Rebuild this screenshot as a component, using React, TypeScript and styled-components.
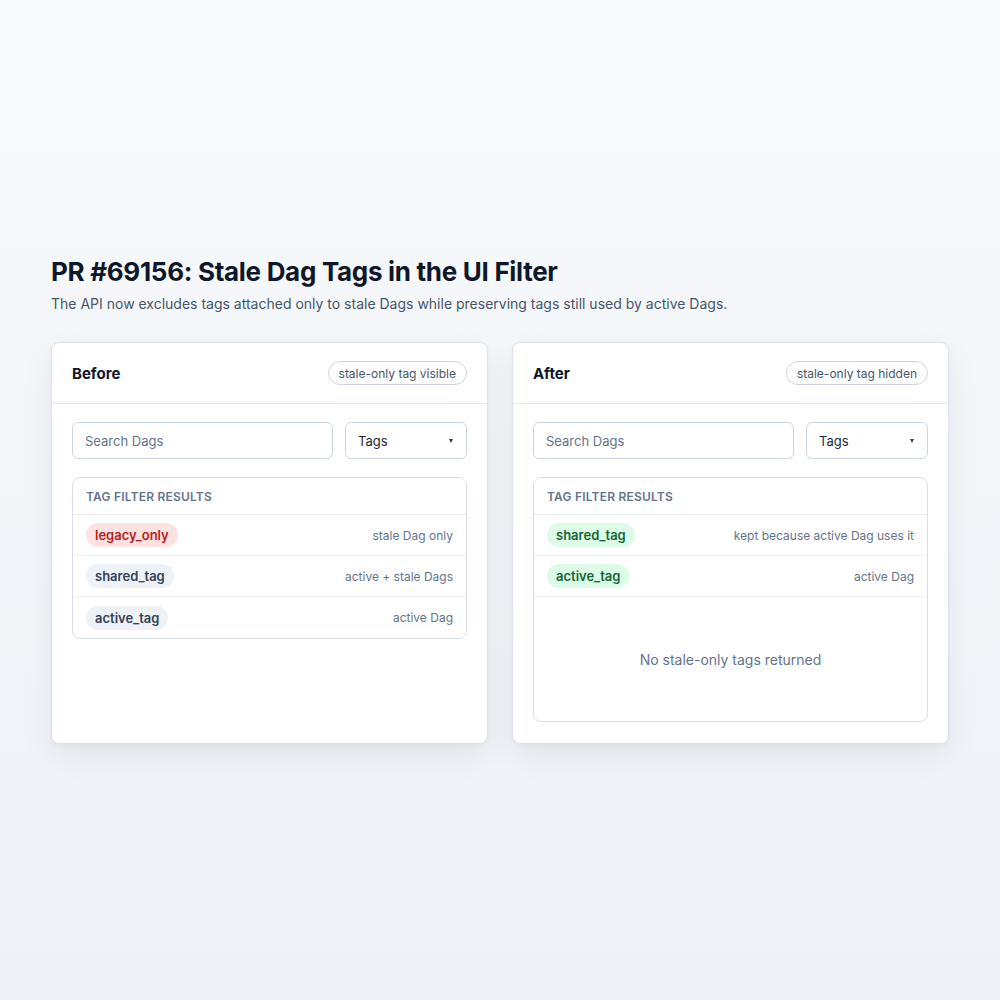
import React from "react";
import styled, { createGlobalStyle } from "styled-components";

const Global = createGlobalStyle`
  html, body { margin: 0; padding: 0; }
  body {
    font-family: Inter, "Noto Sans", "Liberation Sans", sans-serif;
    background: linear-gradient(180deg, #f8fafc 0%, #eef2f7 100%);
    color: #0f172a;
    -webkit-font-smoothing: antialiased;
  }
  * { box-sizing: border-box; }
`;

const Page = styled.main`
  min-height: 1000px;
  display: flex;
  align-items: center;
  justify-content: center;
  padding: 0 51px;
`;

const Wrap = styled.div`
  width: 898px;
`;

const Title = styled.h1`
  margin: 0 0 6px;
  font-size: 26px;
  line-height: 32px;
  font-weight: 700;
  letter-spacing: -0.3px;
  color: #0f172a;
`;

const Subtitle = styled.p`
  margin: 0 0 28px;
  font-size: 14px;
  line-height: 20px;
  color: #475569;
`;

const Grid = styled.div`
  display: grid;
  grid-template-columns: 1fr 1fr;
  gap: 24px;
`;

const Card = styled.section`
  background: #fff;
  border: 1px solid #dde3ea;
  border-radius: 8px;
  box-shadow: 0 12px 32px rgba(15, 23, 42, 0.07), 0 2px 6px rgba(15, 23, 42, 0.03);
  display: flex;
  flex-direction: column;
`;

const CardHeader = styled.header`
  display: flex;
  align-items: center;
  justify-content: space-between;
  height: 61px;
  padding: 0 20px;
  border-bottom: 1px solid #e5e9ef;
`;

const CardTitle = styled.h2`
  margin: 0;
  font-size: 15px;
  font-weight: 700;
  color: #0f172a;
`;

const StatusPill = styled.span`
  display: inline-flex;
  align-items: center;
  height: 24px;
  padding: 0 10px;
  border: 1px solid #cfd6e0;
  border-radius: 12px;
  font-size: 12px;
  color: #475569;
`;

const CardBody = styled.div`
  flex: 1;
  display: flex;
  flex-direction: column;
  gap: 18px;
  padding: 18px 20px 21px;
`;

const Controls = styled.div`
  display: grid;
  grid-template-columns: 1fr 122px;
  gap: 12px;
`;

const Field = styled.div<{ $placeholder?: boolean }>`
  height: 37px;
  display: flex;
  align-items: center;
  justify-content: space-between;
  padding: 0 12px;
  border: 1px solid #cbd5e1;
  border-radius: 6px;
  font-size: 13px;
  color: ${(p) => (p.$placeholder ? "#64748b" : "#1e293b")};
`;

/* small down-pointing triangle of the select */
const Caret = styled.span`
  width: 0;
  height: 0;
  border-left: 2.5px solid transparent;
  border-right: 2.5px solid transparent;
  border-top: 4px solid #334155;
  margin-right: 1px;
`;

const Results = styled.div`
  border: 1px solid #d9dfe7;
  border-radius: 8px;
  display: flex;
  flex-direction: column;
`;

const ResultsHead = styled.div`
  height: 37px;
  display: flex;
  align-items: center;
  padding: 0 13px;
  font-size: 12px;
  font-weight: 600;
  letter-spacing: 0.2px;
  text-transform: uppercase;
  color: #64748b;
  border-bottom: 1px solid #e8ecf1;
`;

const Row = styled.div`
  height: 41px;
  display: flex;
  align-items: center;
  justify-content: space-between;
  padding: 0 13px;
  border-bottom: 1px solid #eef1f5;
  &:last-child { border-bottom: none; }
`;

type Tone = "red" | "gray" | "green";
const toneBg: Record<Tone, string> = { red: "#fee2e2", gray: "#eef2f7", green: "#dcfce7" };
const toneFg: Record<Tone, string> = { red: "#b91c1c", gray: "#334155", green: "#166534" };

const Tag = styled.span<{ $tone: Tone }>`
  display: inline-flex;
  align-items: center;
  height: 24px;
  padding: 0 9px;
  border-radius: 12px;
  font-size: 13px;
  font-weight: 600;
  background: ${(p) => toneBg[p.$tone]};
  color: ${(p) => toneFg[p.$tone]};
`;

const Note = styled.span`
  font-size: 12px;
  color: #64748b;
`;

const Empty = styled.div`
  height: 124px;
  display: flex;
  align-items: center;
  justify-content: center;
  font-size: 14px;
  color: #64748b;
`;

type Item = { tag: string; tone: Tone; note: string };

const before: Item[] = [
  { tag: "legacy_only", tone: "red", note: "stale Dag only" },
  { tag: "shared_tag", tone: "gray", note: "active + stale Dags" },
  { tag: "active_tag", tone: "gray", note: "active Dag" },
];

const after: Item[] = [
  { tag: "shared_tag", tone: "green", note: "kept because active Dag uses it" },
  { tag: "active_tag", tone: "green", note: "active Dag" },
];

function Panel({ title, status, items, empty }: { title: string; status: string; items: Item[]; empty?: string }) {
  return (
    <Card>
      <CardHeader>
        <CardTitle>{title}</CardTitle>
        <StatusPill>{status}</StatusPill>
      </CardHeader>
      <CardBody>
        <Controls>
          <Field $placeholder>Search Dags</Field>
          <Field>
            Tags <Caret />
          </Field>
        </Controls>
        <Results>
          <ResultsHead>Tag filter results</ResultsHead>
          {items.map((it) => (
            <Row key={it.tag}>
              <Tag $tone={it.tone}>{it.tag}</Tag>
              <Note>{it.note}</Note>
            </Row>
          ))}
          {empty && <Empty>{empty}</Empty>}
        </Results>
      </CardBody>
    </Card>
  );
}

export default function App() {
  return (
    <>
      <Global />
      <Page>
        <Wrap>
          <Title>PR #69156: Stale Dag Tags in the UI Filter</Title>
          <Subtitle>
            The API now excludes tags attached only to stale Dags while preserving tags still used by active Dags.
          </Subtitle>
          <Grid>
            <Panel title="Before" status="stale-only tag visible" items={before} />
            <Panel title="After" status="stale-only tag hidden" items={after} empty="No stale-only tags returned" />
          </Grid>
        </Wrap>
      </Page>
    </>
  );
}
